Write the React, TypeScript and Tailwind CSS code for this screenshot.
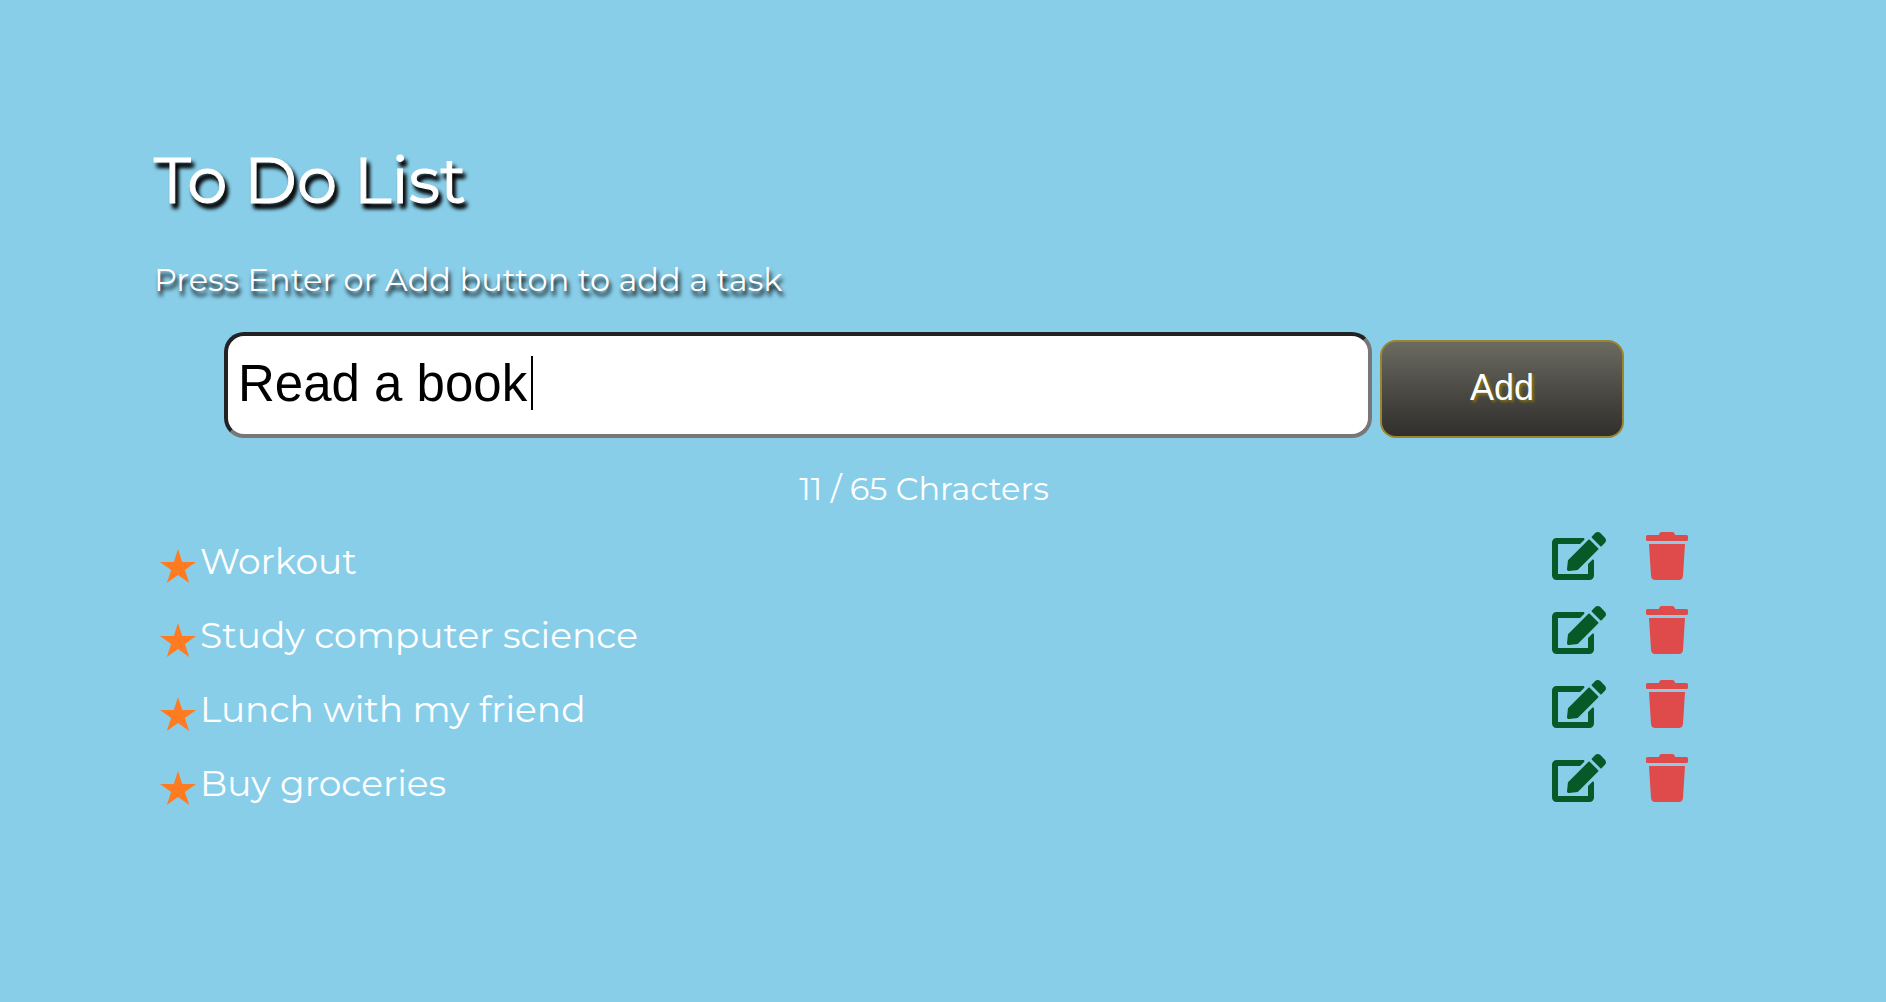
import { useState } from "react";
import { FaEdit, FaTrash } from "react-icons/fa";

const MAX_LENGTH = 65;

function Star() {
  return (
    <svg viewBox="0 0 36 34" className="mt-2.5 h-[34px] w-9 shrink-0" fill="#ff7b22" aria-hidden="true">
      <polygon points="18,0 22.2,13 36,13 24.9,21 29.2,34 18,26 6.8,34 11.1,21 0,13 13.8,13" />
    </svg>
  );
}

function Task({ name, onEdit, onDelete }: { name: string; onEdit: () => void; onDelete: () => void }) {
  return (
    <li className="flex h-[74px] items-start px-1.5">
      <div className="flex flex-1 items-center gap-1 pt-1">
        <Star />
        <span className="text-4xl leading-[50px]">{name}</span>
      </div>
      <div className="flex items-center gap-10">
        <button type="button" aria-label={`Edit ${name}`} onClick={onEdit} className="text-[#075a27]">
          <FaEdit className="h-12 w-[54px]" />
        </button>
        <button type="button" aria-label={`Delete ${name}`} onClick={onDelete} className="text-[#df4a4b]">
          <FaTrash className="h-12 w-[42px]" />
        </button>
      </div>
    </li>
  );
}

export default function App() {
  const [text, setText] = useState("Read a book");
  const [focused, setFocused] = useState(false);
  const [tasks, setTasks] = useState(["Workout", "Study computer science", "Lunch with my friend", "Buy groceries"]);

  const add = () => {
    if (!text.trim()) return;
    setTasks([...tasks, text.trim()]);
    setText("");
  };
  const remove = (index: number) => setTasks(tasks.filter((_, i) => i !== index));

  return (
    <main className="min-h-screen bg-[#89cee9] pl-[154px] pr-48 pt-[140px] pb-10 font-[Montserrat,Inter,sans-serif] text-white">
      <h1 className="text-[64px] leading-20 font-normal [-webkit-text-stroke:1px_white] [text-shadow:3px_5px_4px_#000,3px_5px_4px_#000]">
        To Do List
      </h1>
      <form
        onSubmit={(e) => {
          e.preventDefault();
          add();
        }}
      >
        <label htmlFor="task" className="mt-10 block text-[32px] leading-10 [text-shadow:2px_5px_4px_#000]">
          Press Enter or Add button to add a task
        </label>
        <div className="mt-8 flex items-end gap-2 px-[70px]">
          <div className="relative flex-1">
            <input
              id="task"
              type="text"
              value={text}
              maxLength={MAX_LENGTH}
              onFocus={() => setFocused(true)}
              onBlur={() => setFocused(false)}
              onChange={(e) => setText(e.target.value)}
              className="block h-[106px] w-full rounded-[20px] border-4 border-t-[#222] border-l-[#222] border-r-[#777] border-b-[#777] bg-white px-2.5 pb-1 font-['Liberation_Sans',Arial,sans-serif] text-[51px] text-black outline-none"
            />
            {!focused && text === "Read a book" && (
              <span className="absolute top-6 left-[307px] h-[54px] w-0.5 bg-black" aria-hidden="true" />
            )}
          </div>
          <button
            type="submit"
            className="h-[98px] w-[244px] rounded-2xl border-2 border-[#9c8530] bg-linear-to-b from-[#6c6b61] via-[#4c4b45] to-[#302f2d] pb-0.5 font-['Liberation_Sans',Arial,sans-serif] text-4xl [text-shadow:2px_2px_3px_#8a7410]"
          >
            Add
          </button>
        </div>
      </form>
      <p className="mt-[31px] text-center text-[32px] leading-10">
        {`${text.length} / ${MAX_LENGTH} Chracters`}
      </p>
      <ul className="mt-[23px]">
        {tasks.map((name, i) => (
          <Task
            key={name + i}
            name={name}
            onEdit={() => {
              setText(name);
              remove(i);
            }}
            onDelete={() => remove(i)}
          />
        ))}
      </ul>
    </main>
  );
}
